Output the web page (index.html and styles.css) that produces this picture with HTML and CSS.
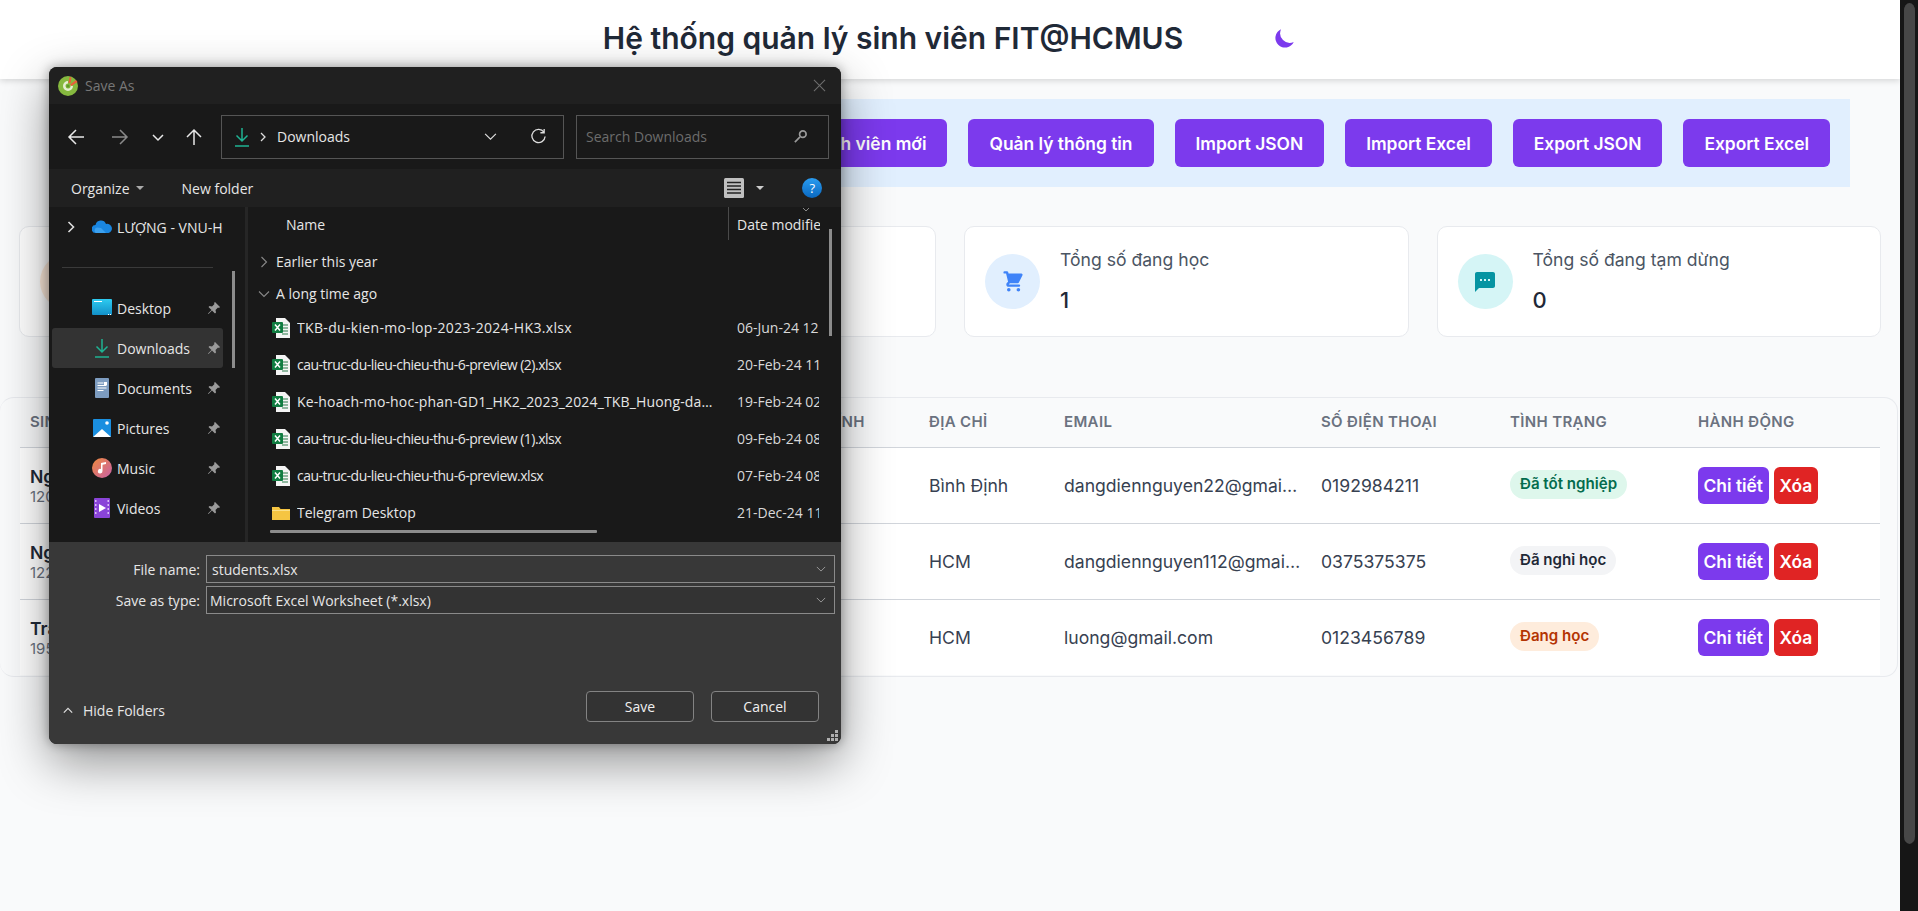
FILE: index.html
```html
<!DOCTYPE html>
<html lang="vi">
<head>
<meta charset="utf-8">
<title>Hệ thống quản lý sinh viên FIT@HCMUS</title>
<link rel="stylesheet" href="styles.css">
</head>
<body>
<div class="page">
  <header class="topbar">
    <h1 class="title">Hệ thống quản lý sinh viên FIT@HCMUS</h1>
    <svg class="moon" viewBox="0 0 20 20"><path d="M17.293 13.293A8 8 0 016.707 2.707a8.001 8.001 0 1010.586 10.586z"/></svg>
  </header>

  <div class="toolbar">
    <button class="tool-btn">Thêm sinh viên mới</button>
    <button class="tool-btn">Quản lý thông tin</button>
    <button class="tool-btn">Import JSON</button>
    <button class="tool-btn">Import Excel</button>
    <button class="tool-btn">Export JSON</button>
    <button class="tool-btn">Export Excel</button>
  </div>

  <section class="cards">
    <div class="card">
      <div class="circle c-orange"></div>
      <div class="card-body"><p class="card-title">Tổng số sinh viên</p><p class="card-value">3</p></div>
    </div>
    <div class="card">
      <div class="circle c-green"></div>
      <div class="card-body"><p class="card-title">Tổng số đã tốt nghiệp</p><p class="card-value">1</p></div>
    </div>
    <div class="card">
      <div class="circle c-blue"><svg class="card-icon" viewBox="0 0 20 20"><path d="M3 1a1 1 0 000 2h1.22l.305 1.222a.997.997 0 00.01.042l1.358 5.43-.893.892C3.74 11.846 4.632 14 6.414 14H15a1 1 0 000-2H6.414l1-1H14a1 1 0 00.894-.553l3-6A1 1 0 0017 3H6.28l-.31-1.243A1 1 0 005 1H3zM16 16.5a1.5 1.5 0 11-3 0 1.5 1.5 0 013 0zM6.5 18a1.5 1.5 0 100-3 1.5 1.5 0 000 3z"/></svg></div>
      <div class="card-body"><p class="card-title">Tổng số đang học</p><p class="card-value">1</p></div>
    </div>
    <div class="card">
      <div class="circle c-teal"><svg class="card-icon" viewBox="0 0 24 24"><path d="M20 2H4c-1.1 0-1.99.9-1.99 2L2 22l4-4h14c1.1 0 2-.9 2-2V4c0-1.1-.9-2-2-2zM9 11H7V9h2v2zm4 0h-2V9h2v2zm4 0h-2V9h2v2z"/></svg></div>
      <div class="card-body"><p class="card-title">Tổng số đang tạm dừng</p><p class="card-value">0</p></div>
    </div>
  </section>

  <section class="table-wrap">
    <table class="students">
      <colgroup>
        <col class="w-a"><col class="w-b"><col class="w-c"><col class="w-d"><col class="w-e"><col class="w-f"><col class="w-g"><col class="w-h">
      </colgroup>
      <thead>
        <tr><th>Sinh viên</th><th>Ngày sinh</th><th>Giới tính</th><th>Địa chỉ</th><th>Email</th><th>Số điện thoại</th><th>Tình trạng</th><th>Hành động</th></tr>
      </thead>
      <tbody>
        <tr>
          <td><div class="name">Nguyễn Đăng Điền</div><div class="sid">12000001</div></td>
          <td>01/01/2002</td><td>Nam</td><td>Bình Định</td><td class="ell">dangdiennguyen22@gmail.com</td><td>0192984211</td>
          <td><span class="badge b-green">Đã tốt nghiệp</span></td>
          <td><div class="acts"><button class="act act-v">Chi tiết</button><button class="act act-r">Xóa</button></div></td>
        </tr>
        <tr>
          <td><div class="name">Nguyễn Đăng Điền</div><div class="sid">12200002</div></td>
          <td>02/02/2002</td><td>Nam</td><td>HCM</td><td class="ell">dangdiennguyen112@gmail.com</td><td>0375375375</td>
          <td><span class="badge b-gray">Đã nghỉ học</span></td>
          <td><div class="acts"><button class="act act-v">Chi tiết</button><button class="act act-r">Xóa</button></div></td>
        </tr>
        <tr>
          <td><div class="name">Trần Lượng</div><div class="sid">19500003</div></td>
          <td>03/03/2001</td><td>Nam</td><td>HCM</td><td class="ell">luong@gmail.com</td><td>0123456789</td>
          <td><span class="badge b-orange">Đang học</span></td>
          <td><div class="acts"><button class="act act-v">Chi tiết</button><button class="act act-r">Xóa</button></div></td>
        </tr>
      </tbody>
    </table>
  </section>
</div>

<div class="page-scroll"><div class="page-thumb"></div></div>

<div class="dialog">
  <div class="dlg-title">
    <svg class="coc" viewBox="0 0 20 20"><circle cx="10" cy="10" r="10" fill="#86b93f"/><path d="M10 5a5 5 0 1 0 5 5l-2.500-.5a2.500 2.500 0 1 1-2.500-2z" fill="#e6efd2"/><circle cx="10" cy="10" r="1.600" fill="#5e9a2a"/><path d="M10.500 7l1-6 2 .5-1 5.500zM12 8.500l6-4.500 1.500 2-6 4z" fill="#e8603a"/></svg>
    <span class="dlg-name">Save As</span>
    <svg class="dlg-x" viewBox="0 0 14 14"><path d="M1 1l12 12M13 1L1 13"/></svg>
  </div>

  <div class="dlg-nav">
    <svg class="nav-ico ni-back" viewBox="0 0 24 24"><path d="M20 12H5M12 5l-7 7 7 7"/></svg>
    <svg class="nav-ico ni-fwd" viewBox="0 0 24 24"><path d="M4 12h15M12 5l7 7-7 7"/></svg>
    <svg class="nav-ico ni-down" viewBox="0 0 24 24"><path d="M7 10l5 5 5-5"/></svg>
    <svg class="nav-ico ni-up" viewBox="0 0 24 24"><path d="M12 20V5M5 12l7-7 7 7"/></svg>
    <div class="addr">
      <svg class="dl" viewBox="0 0 14 20"><path d="M7 1v13M1.500 8.500L7 14l5.500-5.500M0 19h14"/></svg>
      <svg class="addr-sep" viewBox="0 0 8 10"><path d="M2 1l4 4-4 4"/></svg>
      <span class="addr-text">Downloads</span>
      <svg class="addr-v" viewBox="0 0 14 10"><path d="M1 2l6 6 6-6"/></svg>
      <svg class="addr-r" viewBox="0 0 18 18"><path d="M14.800 4.500A7 7 0 1 0 16 9M15 1v4h-4"/></svg>
    </div>
    <div class="search">
      <span class="search-text">Search Downloads</span>
      <svg class="search-ico" viewBox="0 0 16 16"><circle cx="10.500" cy="5.500" r="3.500"/><path d="M7.500 8.500L2 14"/></svg>
    </div>
  </div>

  <div class="dlg-cmd">
    <span class="cmd-org">Organize</span><span class="caret"></span>
    <span class="cmd-new">New folder</span>
    <svg class="view" viewBox="0 0 20 20"><rect width="20" height="20" rx="1.500" fill="#c0c0c0"/><path d="M3 4.500h14M3 8h14M3 11.500h14M3 15h14" stroke="#222" stroke-width="1.400"/></svg>
    <span class="caret caret-view"></span>
    <span class="help">?</span>
  </div>

  <div class="dlg-body">
    <nav class="side">
      <div class="side-row">
        <svg class="side-chev" viewBox="0 0 8 12"><path d="M1.500 1l5 5-5 5"/></svg>
        <svg class="side-ico" viewBox="0 0 20 14"><path d="M4 13a4 4 0 0 1-.5-8A5.500 5.500 0 0 1 14 4a4.500 4.500 0 0 1 2.500 9z" fill="#1a86e0"/><path d="M4 13a3 3 0 0 1 1-5.500L9 8l5 5z" fill="#3ba0ee"/></svg>
        <span class="side-text">LƯỢNG - VNU-HCM</span>
      </div>
      <div class="side-sep"></div>
      <div class="side-row">
        <svg class="side-ico" viewBox="0 0 20 20"><defs><linearGradient id="gd" x1="0" y1="0" x2="0" y2="1"><stop offset="0" stop-color="#2ecbf0"/><stop offset="1" stop-color="#1290c8"/></linearGradient></defs><rect y="1" width="20" height="16" rx="1" fill="url(#gd)"/><path d="M2 3h8v1H2z" fill="#fff"/><path d="M16 16h1v1h-1zM18 16h1v1h-1z" fill="#fff"/></svg>
        <span class="side-label">Desktop</span>
        <svg class="pin" viewBox="0 0 14 14"><path d="M8 1l5 5-1 1-1-.5L8.500 9 9 11.500 8 12.500 5 9.500 1.500 13 1 12.500 4.500 9 1.500 6l1-1L5 5.500 7.500 3 7 2z"/></svg>
      </div>
      <div class="side-row side-on">
        <svg class="dl dl-side" viewBox="0 0 14 20"><path d="M7 1v13M1.500 8.500L7 14l5.500-5.500M0 19h14"/></svg>
        <span class="side-label">Downloads</span>
        <svg class="pin" viewBox="0 0 14 14"><path d="M8 1l5 5-1 1-1-.5L8.500 9 9 11.500 8 12.500 5 9.500 1.500 13 1 12.500 4.500 9 1.500 6l1-1L5 5.500 7.500 3 7 2z"/></svg>
      </div>
      <div class="side-row">
        <svg class="side-ico" viewBox="0 0 20 20"><rect x="3" width="14" height="20" rx="1" fill="#7d9cc0"/><path d="M5.500 5h6M5.500 7.500h9M5.500 10h9M5.500 12.500h6" stroke="#fff" stroke-width="1"/><rect x="12" y="4" width="3" height="3" fill="#fff"/></svg>
        <span class="side-label">Documents</span>
        <svg class="pin" viewBox="0 0 14 14"><path d="M8 1l5 5-1 1-1-.5L8.500 9 9 11.500 8 12.500 5 9.500 1.500 13 1 12.500 4.500 9 1.500 6l1-1L5 5.500 7.500 3 7 2z"/></svg>
      </div>
      <div class="side-row">
        <svg class="side-ico" viewBox="0 0 20 20"><rect x="1" y="1" width="18" height="18" rx="1" fill="#1a8fe0"/><path d="M1 19l9-8 9 8z" fill="#fff"/><circle cx="15" cy="5" r="1.800" fill="#fff"/></svg>
        <span class="side-label">Pictures</span>
        <svg class="pin" viewBox="0 0 14 14"><path d="M8 1l5 5-1 1-1-.5L8.500 9 9 11.500 8 12.500 5 9.500 1.500 13 1 12.500 4.500 9 1.500 6l1-1L5 5.500 7.500 3 7 2z"/></svg>
      </div>
      <div class="side-row">
        <svg class="side-ico" viewBox="0 0 20 20"><defs><linearGradient id="gm" x1="0" y1="0" x2="1" y2="1"><stop offset="0" stop-color="#f08a3c"/><stop offset="1" stop-color="#c860a8"/></linearGradient></defs><circle cx="10" cy="10" r="10" fill="url(#gm)"/><path d="M9 5l5-1v2l-3.500.8V13a2.300 2.300 0 1 1-1.500-2z" fill="#fff"/></svg>
        <span class="side-label">Music</span>
        <svg class="pin" viewBox="0 0 14 14"><path d="M8 1l5 5-1 1-1-.5L8.500 9 9 11.500 8 12.500 5 9.500 1.500 13 1 12.500 4.500 9 1.500 6l1-1L5 5.500 7.500 3 7 2z"/></svg>
      </div>
      <div class="side-row">
        <svg class="side-ico" viewBox="0 0 20 20"><rect x="2" width="16" height="20" rx="1" fill="#8a44d8"/><path d="M7 6l7 4-7 4z" fill="#fff"/><path d="M3 2h1.500v2H3zM3 6h1.500v2H3zM3 10h1.500v2H3zM3 14h1.500v2H3zM15.500 2H17v2h-1.500zM15.500 6H17v2h-1.500zM15.500 10H17v2h-1.500zM15.500 14H17v2h-1.500z" fill="#d9bdf5"/></svg>
        <span class="side-label">Videos</span>
        <svg class="pin" viewBox="0 0 14 14"><path d="M8 1l5 5-1 1-1-.5L8.500 9 9 11.500 8 12.500 5 9.500 1.500 13 1 12.500 4.500 9 1.500 6l1-1L5 5.500 7.500 3 7 2z"/></svg>
      </div>
      <div class="side-row">
        <svg class="side-ico" viewBox="0 0 20 16"><path d="M1 2h7v12H1zM8 4h11v10H8z" fill="#f5c242"/></svg>
      </div>
      <div class="side-thumb"></div>
    </nav>

    <div class="list">
      <div class="list-head">
        <span class="head-name">Name</span>
        <span class="head-date">Date modified</span>
        <svg class="head-sort" viewBox="0 0 8 5"><path d="M1 1l3 3 3-3"/></svg>
      </div>
      <div class="group"><svg class="g-chev" viewBox="0 0 8 12"><path d="M1.500 1l5 5-5 5"/></svg>Earlier this year</div>
      <div class="group group-open"><svg class="g-chev" viewBox="0 0 12 8"><path d="M1 1.500l5 5 5-5"/></svg>A long time ago</div>

      <div class="file">
        <svg class="xl" viewBox="0 0 18 20"><path d="M4 0h9l5 5v15H4z" fill="#f4f4f4"/><path d="M10 7h6M10 10h6M10 13h6M10 16h6" stroke="#2a7a4a"/><rect y="4" width="11" height="11" rx="1" fill="#107c41"/><path d="M3 6.500l5 6M8 6.500l-5 6" stroke="#fff" stroke-width="1.500"/></svg>
        <span class="f-name f-wide">TKB-du-kien-mo-lop-2023-2024-HK3.xlsx</span><span class="f-date">06-Jun-24 12:30</span>
      </div>
      <div class="file">
        <svg class="xl" viewBox="0 0 18 20"><path d="M4 0h9l5 5v15H4z" fill="#f4f4f4"/><path d="M10 7h6M10 10h6M10 13h6M10 16h6" stroke="#2a7a4a"/><rect y="4" width="11" height="11" rx="1" fill="#107c41"/><path d="M3 6.500l5 6M8 6.500l-5 6" stroke="#fff" stroke-width="1.500"/></svg>
        <span class="f-name f-tight">cau-truc-du-lieu-chieu-thu-6-preview (2).xlsx</span><span class="f-date">20-Feb-24 11:12</span>
      </div>
      <div class="file">
        <svg class="xl" viewBox="0 0 18 20"><path d="M4 0h9l5 5v15H4z" fill="#f4f4f4"/><path d="M10 7h6M10 10h6M10 13h6M10 16h6" stroke="#2a7a4a"/><rect y="4" width="11" height="11" rx="1" fill="#107c41"/><path d="M3 6.500l5 6M8 6.500l-5 6" stroke="#fff" stroke-width="1.500"/></svg>
        <span class="f-name f-long">Ke-hoach-mo-hoc-phan-GD1_HK2_2023_2024_TKB_Huong-dan-dang-ky-hoc-phan.xlsx</span><span class="f-date">19-Feb-24 02:41</span>
      </div>
      <div class="file">
        <svg class="xl" viewBox="0 0 18 20"><path d="M4 0h9l5 5v15H4z" fill="#f4f4f4"/><path d="M10 7h6M10 10h6M10 13h6M10 16h6" stroke="#2a7a4a"/><rect y="4" width="11" height="11" rx="1" fill="#107c41"/><path d="M3 6.500l5 6M8 6.500l-5 6" stroke="#fff" stroke-width="1.500"/></svg>
        <span class="f-name f-tight">cau-truc-du-lieu-chieu-thu-6-preview (1).xlsx</span><span class="f-date">09-Feb-24 08:20</span>
      </div>
      <div class="file">
        <svg class="xl" viewBox="0 0 18 20"><path d="M4 0h9l5 5v15H4z" fill="#f4f4f4"/><path d="M10 7h6M10 10h6M10 13h6M10 16h6" stroke="#2a7a4a"/><rect y="4" width="11" height="11" rx="1" fill="#107c41"/><path d="M3 6.500l5 6M8 6.500l-5 6" stroke="#fff" stroke-width="1.500"/></svg>
        <span class="f-name f-tight">cau-truc-du-lieu-chieu-thu-6-preview.xlsx</span><span class="f-date">07-Feb-24 08:05</span>
      </div>
      <div class="file">
        <svg class="xl" viewBox="0 0 18 14"><path d="M0 1h7l1.500 2H18v11H0z" fill="#f5c542"/><path d="M0 4h18v1H0z" fill="#fbe08a"/></svg>
        <span class="f-name">Telegram Desktop</span><span class="f-date">21-Dec-24 11:00</span>
      </div>
      <div class="bar-v"></div>
      <div class="bar-h"></div>
    </div>
  </div>

  <div class="dlg-foot">
    <div class="field">
      <span class="f-label">File name:</span>
      <div class="f-input f-input-name"><span>students.xlsx</span><svg class="f-v" viewBox="0 0 12 7"><path d="M1 1l5 5 5-5"/></svg></div>
    </div>
    <div class="field">
      <span class="f-label">Save as type:</span>
      <div class="f-input"><span>Microsoft Excel Worksheet (*.xlsx)</span><svg class="f-v" viewBox="0 0 12 7"><path d="M1 1l5 5 5-5"/></svg></div>
    </div>
    <div class="actions">
      <span class="hide"><svg class="hide-chev" viewBox="0 0 12 8"><path d="M1 6.500l5-5 5 5"/></svg>Hide Folders</span>
      <button class="dlg-btn btn-save">Save</button>
      <button class="dlg-btn">Cancel</button>
    </div>
    <svg class="grip" viewBox="0 0 12 12"><path d="M8 0h3v3H8zM4 4h3v3H4zM8 4h3v3H8zM0 8h3v3H0zM4 8h3v3H4zM8 8h3v3H8z"/></svg>
  </div>
</div>
</body>
</html>
```

FILE: styles.css
```css
* { box-sizing: border-box; }
html, body { margin: 0; height: 100%; overflow: hidden; }
body { display: flex; font-family: Inter, "Noto Sans", sans-serif; background: #f9fafb; color: #1f2937; }
p, h1 { margin: 0; }
button { font-family: inherit; border: 0; cursor: default; }

.page { flex: 1; min-width: 0; }
.page-scroll { width: 18px; background: #161616; padding: 3px 3px 0 4px; }
.page-thumb { height: 841px; background: #474747; border-radius: 6px 6px 6px 6px / 8px 8px 8px 8px; }

.topbar { height: 79px; padding-bottom: 3px; background: #fff; box-shadow: 0 2px 6px rgba(0,0,0,.14); display: flex; align-items: center; justify-content: center; gap: 90px; }
.title { font-size: 30px; font-weight: 600; line-height: 36px; color: #1f2937; }
.moon { width: 24px; height: 24px; fill: #7c3aed; }

.toolbar { margin: 20px 50px 0 auto; width: fit-content; height: 88px; padding: 20px; background: #e1effe; display: flex; gap: 21px; }
.tool-btn { height: 48px; padding: 0 21px; border-radius: 6px; background: #7c3aed; color: #fff; font-size: 17.4px; font-weight: 600; }

.cards { margin-top: 39px; padding: 0 19px; display: grid; grid-template-columns: repeat(4, 1fr); gap: 28px; }
.card { height: 111px; padding: 0 20px; background: #fff; border: 1px solid #e8eaee; border-radius: 10px; display: flex; align-items: center; gap: 20px; }
.circle { width: 55px; height: 55px; border-radius: 50%; display: flex; align-items: center; justify-content: center; flex: none; }
.c-orange { background: #feecdc; }
.c-green { background: #def7ec; }
.c-blue { background: #e1effe; fill: #3f83f8; }
.c-teal { background: #d5f5f6; fill: #0694a2; }
.card-icon { width: 24px; height: 24px; }
.card-body { padding-bottom: 2px; }
.card-title { font-size: 17.6px; line-height: 24px; color: #4b5563; font-weight: 400; }
.card-value { margin-top: 15px; font-size: 22px; line-height: 26px; font-weight: 500; color: #1f2937; }

.table-wrap { margin: 60px 2px 0 0; height: 280px; padding: 0 18px 0 20px; background: #f9fafb; border: 1px solid #e8eaee; border-left: 0; border-radius: 14px; }
.students { width: 1860px; table-layout: fixed; border-collapse: collapse; }
.w-a { width: 300px; } .w-b { width: 460px; } .w-c { width: 139px; } .w-d { width: 135px; }
.w-e { width: 257px; } .w-f { width: 189px; } .w-g { width: 188px; } .w-h { width: 192px; }
.students th { height: 49px; padding: 0 10px 2px; text-align: left; font-size: 15px; font-weight: 600; letter-spacing: .35px; text-transform: uppercase; color: #6b7280; }
.students td { height: 76px; padding: 0 10px; background: #fff; border-top: 1px solid #d1d5db; font-size: 17.6px; color: #374151; }
.students td.ell { overflow: hidden; white-space: nowrap; text-overflow: ellipsis; }
.name { font-weight: 600; line-height: 23px; color: #1f2937; white-space: nowrap; }
.sid { font-size: 15px; line-height: 18px; color: #6b7280; }
.badge { display: inline-block; height: 29px; line-height: 27px; padding: 0 10px; border-radius: 15px; font-size: 15.1px; font-weight: 600; position: relative; top: -1px; }
.b-green { background: #def7ec; color: #046c4e; }
.b-gray { background: #f3f4f6; color: #1f2937; }
.b-orange { background: #feecdc; color: #b43403; }
.acts { display: flex; gap: 5px; }
.act { height: 37px; padding: 0 5.5px; border-radius: 6px; color: #fff; font-size: 17.4px; font-weight: 600; }
.act-v { background: #7c3aed; }
.act-r { background: #e02424; padding: 0 6px; }

/* Save As dialog: a window floating over the page */
.dialog { position: absolute; left: 49px; top: 67px; width: 792px; height: 677px; border-radius: 8px; overflow: hidden; display: flex; flex-direction: column; font-family: "Open Sans", "Noto Sans", sans-serif; font-size: 14px; color: #e6e6e6; box-shadow: 0 18px 50px rgba(0,0,0,.42), 0 0 12px rgba(0,0,0,.35); background: #191919; }
.dialog svg { flex: none; }
.dlg-title { height: 37px; background: #202020; display: flex; align-items: center; padding: 0 15px 0 9px; }
.coc { width: 20px; height: 20px; }
.dlg-name { margin-left: 7px; color: #777; }
.dlg-x { margin-left: auto; width: 13px; height: 13px; fill: none; stroke: #6e6e6e; stroke-width: 1.100; }

.dlg-nav { height: 65px; background: #191919; display: flex; align-items: center; padding: 0 12px 0 15px; }
.nav-ico { width: 24px; height: 24px; fill: none; stroke: #e8e8e8; stroke-width: 1.500; }
.ni-fwd { margin-left: 20px; stroke: #8a8a8a; }
.ni-down { margin-left: 14px; }
.ni-up { margin-left: 12px; }
.addr { margin-left: 15px; width: 343px; height: 44px; border: 1px solid #555; display: flex; align-items: center; padding-left: 13px; }
.dl { width: 14px; height: 20px; fill: none; stroke: #1fb393; stroke-width: 1.500; }
.dl-side { margin: 0 3px; }
.addr-sep { width: 8px; height: 10px; margin-left: 10px; fill: none; stroke: #ddd; stroke-width: 1.300; }
.addr-text { margin-left: 10px; }
.addr-v { margin-left: auto; width: 13px; height: 9px; fill: none; stroke: #ddd; stroke-width: 1.300; }
.addr-r { margin: 0 16px 0 33px; width: 17px; height: 17px; fill: none; stroke: #ddd; stroke-width: 1.400; }
.search { margin-left: 12px; width: 253px; height: 44px; border: 1px solid #555; display: flex; align-items: center; padding: 0 20px 0 9px; justify-content: space-between; }
.search-text { color: #6c6c6c; }
.search-ico { width: 15px; height: 15px; fill: none; stroke: #999; stroke-width: 1.800; }

.dlg-cmd { height: 38px; background: #202020; display: flex; align-items: center; padding-left: 22px; }
.caret { width: 0; height: 0; margin-left: 6px; border: 4px solid transparent; border-top: 4.500px solid #aaa; border-bottom: 0; }
.cmd-new { margin-left: 38px; }
.view { width: 20px; height: 20px; margin-left: 471px; }
.caret-view { margin-left: 12px; border-top-color: #ccc; }
.help { width: 20px; height: 20px; margin-left: 38px; border-radius: 50%; background: linear-gradient(#2a9cf0, #0a68c0); color: #fff; font-size: 13px; line-height: 20px; text-align: center; }

.dlg-body { height: 335px; display: flex; overflow: hidden; position: relative; }
.side { width: 199px; padding: 0 0 0 3px; border-right: 3px solid #262626; flex: none; position: relative; overflow: hidden; }
.side-row { width: 171px; height: 40px; display: flex; align-items: center; padding-left: 40px; position: relative; border-radius: 3px; }
.side-on { background: #333; }
.side-chev { position: absolute; left: 15px; top: 14px; width: 8px; height: 12px; fill: none; stroke: #ddd; stroke-width: 1.600; }
.side-ico { width: 20px; height: 20px; flex: none; }
.side-text { margin-left: 5px; white-space: nowrap; overflow: hidden; width: 106px; }
.side-label { margin-left: 5px; }
.pin { position: absolute; left: 155px; top: 13px; width: 14px; height: 14px; fill: #9a9a9a; }
.side-sep { width: 151px; height: 1px; margin: 20px 0 20px 10px; background: #3a3a3a; }
.side-thumb { position: absolute; left: 183px; top: 64px; width: 3px; height: 97px; background: #8c8c8c; }

.list { flex: 1; min-width: 0; position: relative; overflow: hidden; }
.list-head { height: 38px; position: relative; }
.head-name { position: absolute; left: 38px; top: 8px; }
.head-date { position: absolute; left: 480px; top: 0; height: 33px; width: 92px; padding: 8px 0 0 8px; border-left: 1px solid #4a4a4a; overflow: hidden; white-space: nowrap; }
.head-sort { position: absolute; left: 554px; top: 0; width: 8px; height: 5px; fill: none; stroke: #888; }
.group { height: 33px; display: flex; align-items: center; padding-left: 28px; position: relative; }
.group-open { height: 31px; }
.g-chev { position: absolute; left: 12px; top: 50%; margin-top: -6px; width: 8px; height: 12px; fill: none; stroke: #888; stroke-width: 1.100; }
.group-open .g-chev { left: 10px; margin-top: -4px; width: 12px; height: 8px; }
.file { height: 37px; display: flex; align-items: center; padding-left: 24px; }
.xl { width: 18px; height: 20px; }
.f-name { width: 420px; margin-left: 7px; white-space: nowrap; overflow: hidden; text-overflow: ellipsis; }
.f-wide { letter-spacing: .33px; }
.f-tight { letter-spacing: -.5px; }
.f-long { letter-spacing: .14px; }
.f-date { width: 82px; margin-left: 20px; white-space: nowrap; overflow: hidden; color: #d8d8d8; }
.bar-v { position: absolute; left: 581px; top: 22px; width: 3px; height: 107px; background: #8c8c8c; }
.bar-h { position: absolute; left: 22px; top: 323px; width: 327px; height: 3px; background: #8c8c8c; border-radius: 1px; }

.dlg-foot { flex: 1; background: #383838; padding: 13px 6px 22px 0; display: flex; flex-direction: column; position: relative; }
.field { display: flex; align-items: center; height: 28px; margin-bottom: 3px; }
.f-label { width: 151px; text-align: right; margin-right: 6px; flex: none; }
.f-input { flex: 1; height: 28px; border: 1px solid #8a8a8a; display: flex; align-items: center; justify-content: space-between; padding: 0 8px 0 3px; background: #333; }
.f-input-name { padding-left: 5px; background: #383838; }
.f-v { width: 10px; height: 6px; fill: none; stroke: #aaa; }
.actions { margin-top: auto; display: flex; align-items: center; padding: 0 16px 0 14px; }
.hide { display: flex; align-items: center; gap: 10px; margin: 8px auto 0 0; }
.hide-chev { width: 10px; height: 7px; fill: none; stroke: #ddd; stroke-width: 1.500; }
.dlg-btn { width: 108px; height: 31px; background: #333; border: 1px solid #838383; border-radius: 4px; color: #f0f0f0; font-family: inherit; font-size: 14px; }
.btn-save { margin-right: 17px; }
.grip { position: absolute; right: 2px; bottom: 2px; width: 12px; height: 12px; fill: #b0b0b0; }
```
